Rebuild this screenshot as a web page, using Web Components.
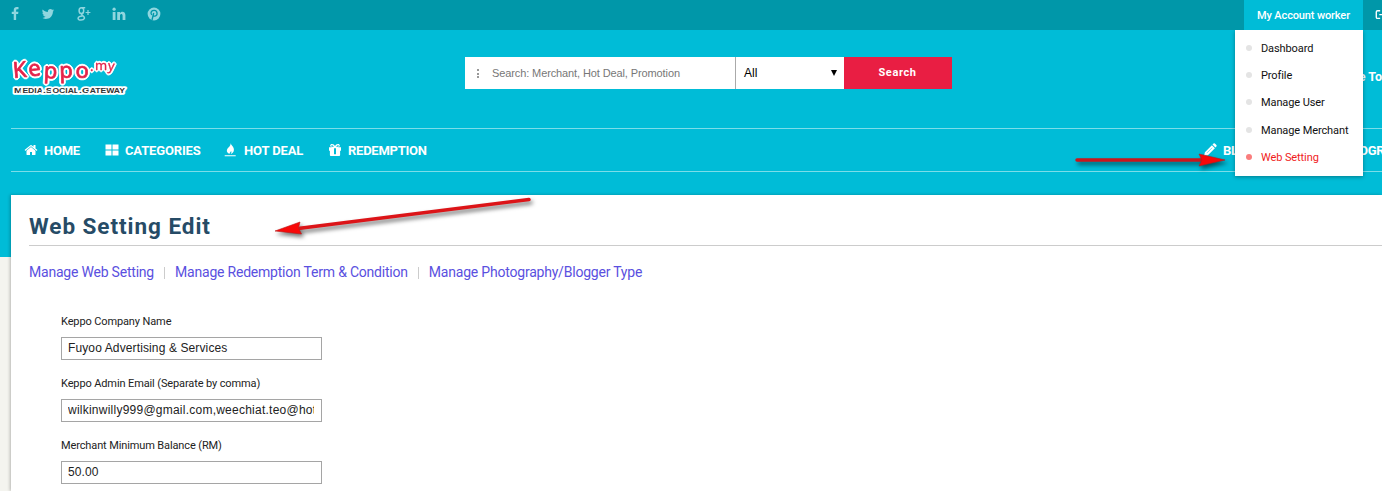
<!DOCTYPE html>
<html lang="en"><head><meta charset="utf-8"><title>Keppo - Web Setting Edit</title>
<style>html,body{margin:0;height:491px;overflow:hidden;background:#f4f4ef}body{font-family:Roboto,"Liberation Sans",sans-serif;position:relative}</style></head>
<body><keppo-page></keppo-page>
<script>
const define=(name,css,html)=>{
  const t=document.createElement('template');
  t.innerHTML=`<style>*{box-sizing:border-box}${css}</style>${html}`;
  customElements.define(name,class extends HTMLElement{
    constructor(){super();this.attachShadow({mode:'open'}).append(t.content.cloneNode(true));}
  });
};
const icons={
 facebook:['0 0 1792 1792','<path d="M1343 12v264h-157q-86 0-116 36t-30 108v189h293l-39 296h-254v759h-306v-759h-255v-296h255v-218q0-186 104-288.5t277-102.5q147 0 228 12z"/>'],
 twitter:['0 0 1792 1792','<path d="M1684 408q-67 98-162 167 1 14 1 42 0 130-38 259.5t-115.5 248.5-184.5 210.5-258 146-323 54.5q-271 0-496-145 35 4 78 4 225 0 401-138-105-2-188-64.5t-114-159.5q33 5 61 5 43 0 85-11-112-23-185.5-111.5t-73.5-205.5v-4q68 38 146 41-66-44-105-115t-39-154q0-88 44-163 121 149 294.5 238.5t371.5 99.5q-8-38-8-74 0-134 94.5-228.5t228.5-94.5q140 0 236 102 109-21 205-78-37 115-142 178 93-10 186-50z"/>'],
 google:['0 0 14 14','<g fill="none" stroke="currentColor" stroke-width="1.5"><ellipse cx="4.4" cy="3.7" rx="2.3" ry="2.9"/><path d="M4.6 .7h3.6M6 6c-1.8 1.3-1.8 1.6 0 2.8 1.5 1 1.7 1.6 1.3 2.7-.8 2.2-6 2.1-6.2 0-.1-1.7 2-2.5 4.5-2.4"/><path d="M11 3v5M8.6 5.5h4.8" stroke-width="1.2"/></g>'],
 linkedin:['0 0 14 14','<circle cx="2.1" cy="2.2" r="1.6"/><path d="M.7 4.9h2.8v8H.7zM5.2 4.9H8v1.2c1.8-2.4 5.4-1.4 5.400 2v4.800h-2.800V8.500c0-2.200-2.600-2.100-2.600 0v4.400H5.200z"/>'],
 pinterest:['0 0 14 14','<circle cx="7" cy="7" r="6.4"/><path d="M5 13l1.700-7M4.700 8C2.800 5 5 3.300 7.400 3.400c3.300.1 3.600 5.400.6 5.700-1 .1-1.500-.3-1.800-.9" fill="none" stroke="#0097a9" stroke-width="1.350"/>'],
 home:['0 0 1792 1792','<path d="M1472 992v480q0 26-19 45t-45 19h-384v-384h-256v384h-384q-26 0-45-19t-19-45v-480q0-1 .5-3t.5-3l575-474 575 474q1 2 1 6zm223-69l-62 74q-8 9-21 11h-3q-13 0-21-7l-692-577-692 577q-12 8-24 7-13-2-21-11l-62-74q-8-10-7-23.5t11-21.5l719-599q32-26 76-26t76 26l244 204v-195q0-14 9-23t23-9h192q14 0 23 9t9 23v408l219 182q10 8 11 21.5t-7 23.5z"/>'],
 grid:['0 0 14 14','<path d="M.5 1.500h6v5h-6zm7 0h6v5h-6zM.5 7.500h6v5h-6zm7 0h6v5h-6z"/>'],
 fire:['0 0 14 14','<path d="M6.600 0c.6 2.600 3.600 3.700 3.300 7-.1 2-1.500 3.500-3.200 4 .8-1 .9-2 .4-3-.4.800-.8 1.300-1.200 1.700-.5.500-.5.900-.2 1.300C3.500 10.200 2.500 8.700 2.900 7 3.500 4.500 7 3.500 6.600 0zM.7 12.200h11v1H.7z"/>'],
 gift:['0 0 14 14','<path fill-rule="evenodd" d="M1 4.200h3C1.500 3.800 1.700 1 4 1c1.500 0 2.200.8 3 2 .8-1.200 1.500-2 3-2 2.300 0 2.500 2.800 0 3.200h3v3.500h-.9v4.400q0 .9-.9.900H2.800q-.9 0-.9-.9V7.700H1zM6 5.300v6h2v-6zM4 2.200c-1.200 0-1.200 1.500 0 1.500h1.800C5.200 2.700 4.700 2.200 4 2.200zm6 0c-.7 0-1.200.5-1.800 1.500H10c1.200 0 1.200-1.500 0-1.500z"/>'],
 pencil:['0 0 14 14','<path d="M1 13l.9-3.800 7-7 3 3-7 7zM9.500 1.600l1-1q.7-.6 1.400 0l1.500 1.500q.6.700 0 1.400l-1 1z"/><path d="M4 9.900l5.100-5.100" stroke="#00bcd7" stroke-width=".5"/>'],
 exit:['0 0 14 14','<path d="M6 2H3Q1.500 2 1.500 3.500v6Q1.500 11 3 11h3M5 6.500h7M9 3l3.500 3.500L9 10" fill="none" stroke="currentColor" stroke-width="1.600"/>']
};
customElements.define('ui-icon',class extends HTMLElement{
  constructor(){super();this.attachShadow({mode:'open'});}
  connectedCallback(){const [v,p]=icons[this.getAttribute('name')];this.shadowRoot.innerHTML=`<style>:host{display:block;width:14px;height:14px;flex:none}svg{display:block;width:100%;height:100%;fill:currentColor}</style><svg viewBox="${v}">${p}</svg>`;}
});
define('top-bar',`:host{display:flex;height:30px;background:#0097a9;color:#8fd6df;position:relative}
.social{display:flex;gap:21px;padding:7px 0 0 8px;flex:1}
.account{width:119px;background:#00bcd7;color:#fff;font:500 11px/31px Roboto;padding-left:13px;white-space:nowrap;letter-spacing:-.13px}
.out{width:19px;padding:9px 0 0 12px;color:#fff;overflow:hidden}.out ui-icon{width:12px;height:12px}`,
`<div class="social"><ui-icon name="facebook"></ui-icon><ui-icon name="twitter" style="margin-left:-2px"></ui-icon><ui-icon name="google" style="margin-left:1px"></ui-icon><ui-icon name="linkedin"></ui-icon><ui-icon name="pinterest"></ui-icon></div><div class="account">My Account worker</div><div class="out"><ui-icon name="exit"></ui-icon></div>`);
define('brand-logo',`:host{display:block;width:120px;height:44px}svg{display:block;overflow:visible}
.name{filter:drop-shadow(1px 1px 0 #fff) drop-shadow(-1px -1px 0 #fff) drop-shadow(1px -1px 0 #fff) drop-shadow(-1px 1px 0 #fff)}
.tag{paint-order:stroke;stroke:#fff;stroke-width:3.500px;stroke-linejoin:round}`,
`<svg width="120" height="44"><text class="tag" y="37" x="3" font-family="Liberation Sans" font-weight="bold" font-size="8" fill="#333" textLength="111" lengthAdjust="spacingAndGlyphs">M<tspan font-size="6.800">EDIA</tspan>.S<tspan font-size="6.800">OCIAL</tspan>.G<tspan font-size="6.800">ATEWAY</tspan></text><g class="name" fill="#e4234a" stroke="#e4234a" stroke-linejoin="round" stroke-linecap="round" font-family="Noto Sans"><text font-size="22" stroke-width=".7" x="2.500 18 32.500 48.500 64.500" y="22 20.500 22 22 22" rotate="-5 -6 3 -2 0">Keppo</text><text font-size="13" stroke-width=".3" x="79 84 96.500" y="15 14 14" rotate="0 0 6">.my</text></g></svg>`);
define('search-bar',`:host{display:flex;width:487px;height:32px;background:#fff}
.q{width:271px;border-right:1px solid #aaa;display:flex;align-items:center;padding-left:12px;color:#777;font:11px "Liberation Sans";letter-spacing:-.11px}
.dots{margin-right:13px;height:9px;background:repeating-linear-gradient(#999 0 2px,transparent 2px 3.500px);width:2px}
.s{width:108px;display:flex;align-items:center;justify-content:space-between;font:12px "Liberation Sans";padding:0 7px 0 8px}
.s i{border:3.500px solid transparent;border-top:6px solid #000;border-bottom:0;width:0}
.b{flex:1;background:#e91e43;color:#fff;text-align:center;font:700 11px/31px Roboto;letter-spacing:.6px;padding-right:1px}`,
`<div class="q"><span class="dots"></span><span>Search: Merchant, Hot Deal, Promotion</span></div><div class="s"><span>All</span><i></i></div><div class="b">Search</div>`);
define('nav-item',`:host{display:flex;align-items:center;gap:6px;height:42px;color:#fff;font:700 13px/42px Roboto;white-space:nowrap;flex:none}span{padding-top:2px}`,`<slot name="icon"></slot><span><slot></slot></span>`);
define('main-nav',`:host{display:flex;height:44px;margin-left:11px;padding-left:13px;border-top:1px solid #7bdde9;border-bottom:1px solid #7bdde9;overflow:hidden}
.left{display:flex;width:1179px;flex:none}nav-item{letter-spacing:-.25px}`,
`<div class="left"><nav-item style="width:81px"><ui-icon slot="icon" name="home"></ui-icon>HOME</nav-item><nav-item style="width:119px;letter-spacing:-.15px"><ui-icon slot="icon" name="grid"></ui-icon>CATEGORIES</nav-item><nav-item style="width:104px;letter-spacing:-.12px"><ui-icon slot="icon" name="fire"></ui-icon>HOT DEAL</nav-item><nav-item><ui-icon slot="icon" name="gift"></ui-icon>REDEMPTION</nav-item></div><nav-item style="width:112px"><ui-icon slot="icon" name="pencil"></ui-icon>BLOGGER</nav-item><nav-item style="margin-left:11px">PHOTOGRAPHY</nav-item>`);
define('site-header',`:host{display:block;height:257px;background:#00bcd7}
.row{display:flex;height:98px;align-items:flex-start}.row brand-logo{margin:26px 334px 0 11px}.row search-bar{margin-top:27px}.welcome{margin-left:auto;width:70px;text-align:right;white-space:nowrap;overflow:hidden;font:700 12.500px/16px Roboto;color:#fff;padding-top:39px}`,
`<top-bar></top-bar><div class="row"><brand-logo></brand-logo><search-bar></search-bar><span class="welcome">Welcome To</span></div><main-nav></main-nav>`);
define('menu-item',`:host{display:flex;align-items:center;height:27.300px;padding-left:11px;font:11px Roboto;letter-spacing:-.1px;color:#111;white-space:nowrap}i{width:6px;height:6px;border-radius:50%;background:#e4e4e4;margin:-1px 9px 0 0}:host([active]){color:#f01c1c}:host([active]) i{background:#fa7d7d}`,`<i></i><slot></slot>`);
define('account-menu',`:host{display:block;position:absolute;left:1235px;top:30px;width:128px;height:146px;background:#fff;padding-top:4.500px;box-shadow:0 1px 4px rgba(0,0,0,.35);clip-path:inset(0 -6px -6px -6px)}`,
`<menu-item>Dashboard</menu-item><menu-item>Profile</menu-item><menu-item>Manage User</menu-item><menu-item>Manage Merchant</menu-item><menu-item active>Web Setting</menu-item>`);
define('form-field',`:host{display:block;height:62px}label{display:block;font:11px/16px Roboto;letter-spacing:-.12px;color:#222;height:23px}.box{width:261px;height:23px;border:1px solid #a5a5a5;padding:0 7px 0 6px;font:12px/20px "Liberation Sans";letter-spacing:var(--tracking,.12px);color:#222}.box div{overflow:hidden;white-space:nowrap}`,
`<label><slot name="label"></slot></label><div class="box"><div><slot></slot></div></div>`);
define('setting-card',`:host{display:block;position:relative;margin:-62px 0 0 11px;height:296px;background:#fff;padding:0 0 0 18px;box-shadow:-1px 0 3px rgba(0,0,0,.25)}
h1{margin:0;height:51px;border-bottom:1px solid #ccc;font:700 22.500px/63px Roboto;letter-spacing:.95px;color:#264b66}
.links{display:flex;font:14px/20px Roboto;letter-spacing:-.21px;color:#5a50e0;margin-top:16px;height:21px;white-space:nowrap}.links i{width:1px;height:12px;background:#ccc;margin:5px 10px 0}
.form{padding:31px 0 0 32px}`,
`<h1>Web Setting Edit</h1><div class="links"><span>Manage Web Setting</span><i></i><span>Manage Redemption Term &amp; Condition</span><i></i><span>Manage Photography/Blogger Type</span></div><div class="form"><form-field><span slot="label">Keppo Company Name</span>Fuyoo Advertising &amp; Services</form-field><form-field style="--tracking:.24px"><span slot="label">Keppo Admin Email (Separate by comma)</span>wilkinwilly999@gmail.com,weechiat.teo@hotmail.com</form-field><form-field><span slot="label">Merchant Minimum Balance (RM)</span>50.00</form-field></div>`);
define('pointer-arrows',`:host{position:absolute;inset:0;pointer-events:none}svg{display:block;filter:drop-shadow(2px 3px 2px rgba(0,0,0,.55))}`,
`<svg width="1382" height="491"><g stroke="#c9161c" stroke-width="3.500" stroke-linecap="round"><path d="M1077 160h126"/><path stroke="#dc1418" d="M529 199.500L300 228.300"/></g><path fill="#f80808" stroke="#b71a1a" stroke-width=".6" d="M1225 160l-26-6 3 6-3 6zM275 231l25-9-1.500 6 3 6z"/></svg>`);
define('keppo-page',`:host{display:block;width:1382px;height:491px;overflow:hidden;position:relative}`,`<site-header></site-header><setting-card></setting-card><account-menu></account-menu><pointer-arrows></pointer-arrows>`);
</script></body></html>
